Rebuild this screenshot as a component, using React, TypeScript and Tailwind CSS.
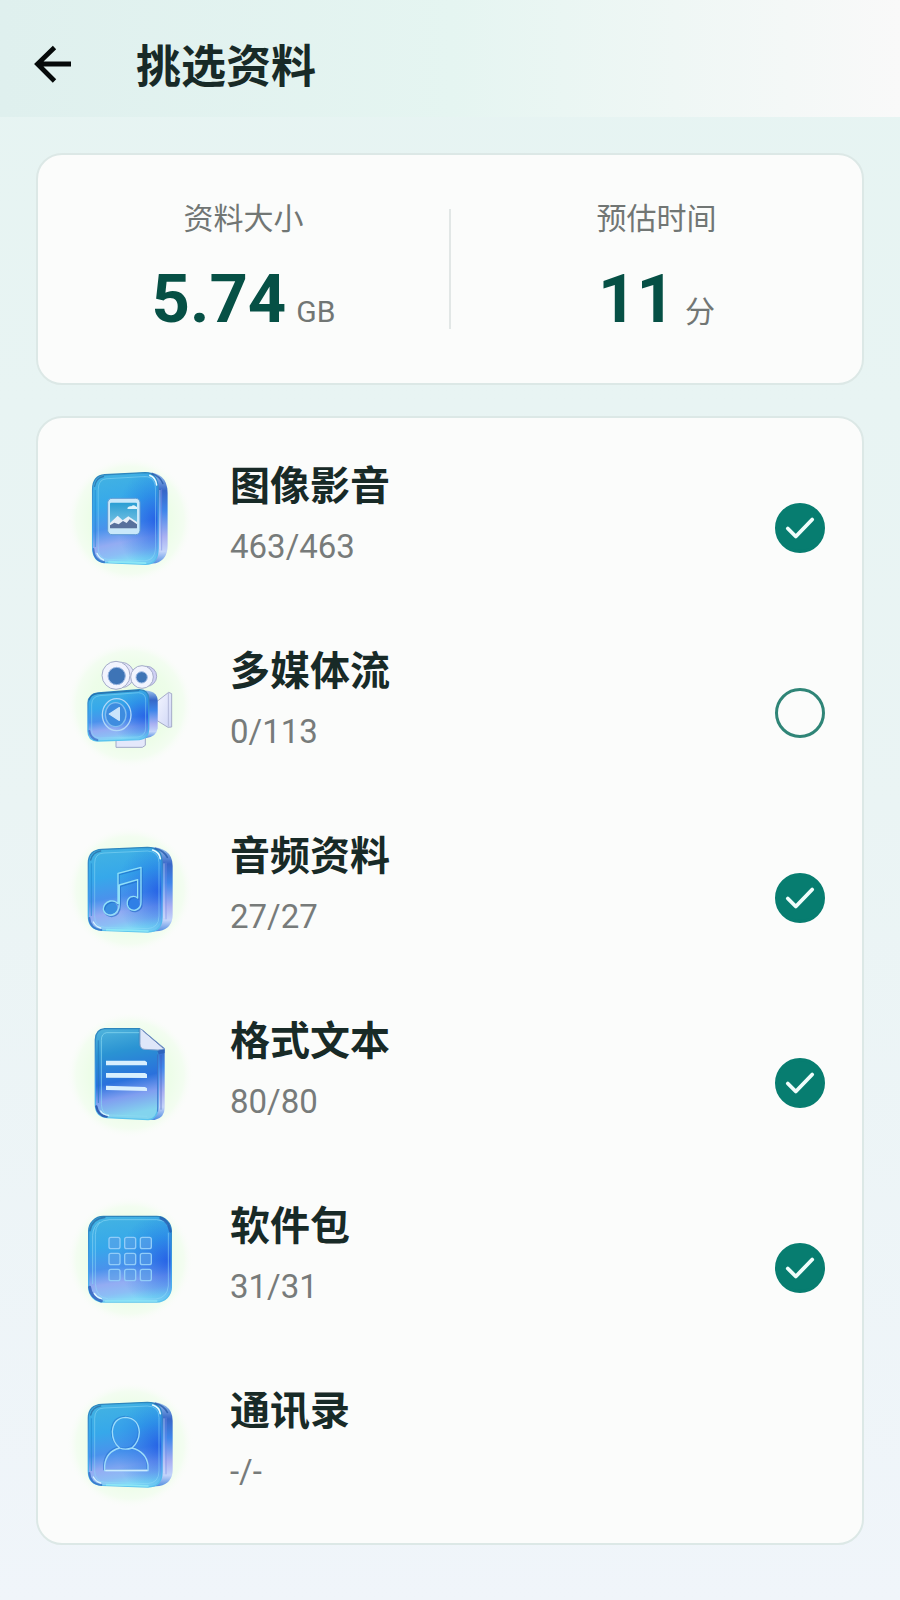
import { useState } from "react";
import type { ReactNode } from "react";

const CJK = "font-[Roboto,'Noto_Sans_CJK_SC',sans-serif]";

function Defs() {
  return (
    <svg className="absolute size-0" aria-hidden="true">
      <defs>
        <radialGradient id="glow">
          <stop offset="0" stopColor="#e8fbe1" />
          <stop offset="0.65" stopColor="#edfde9" />
          <stop offset="0.85" stopColor="#f3fdf1" />
          <stop offset="1" stopColor="#fbfcfb" stopOpacity="0" />
        </radialGradient>
        <linearGradient id="face" x1="0.2" y1="0" x2="0.35" y2="1">
          <stop offset="0" stopColor="#43b3e2" />
          <stop offset="0.35" stopColor="#36a8ea" />
          <stop offset="0.6" stopColor="#4a92ec" />
          <stop offset="0.78" stopColor="#93acf3" />
          <stop offset="0.9" stopColor="#8cbdf5" />
          <stop offset="1" stopColor="#80dcf6" />
        </linearGradient>
        <radialGradient id="deep" cx="0.97" cy="0.52" r="0.6">
          <stop offset="0" stopColor="#1c56e4" stopOpacity="0.8" />
          <stop offset="0.5" stopColor="#1f66e4" stopOpacity="0.38" />
          <stop offset="1" stopColor="#1f7ee4" stopOpacity="0" />
        </radialGradient>
        <linearGradient id="side" x1="0" y1="0" x2="0" y2="1">
          <stop offset="0" stopColor="#9cc4ee" />
          <stop offset="0.2" stopColor="#3767c8" />
          <stop offset="0.42" stopColor="#3f86ea" />
          <stop offset="0.7" stopColor="#a9b0f2" />
          <stop offset="0.86" stopColor="#c3d4fa" />
          <stop offset="1" stopColor="#4d8be0" />
        </linearGradient>
        <linearGradient id="rim" x1="0" y1="0" x2="0" y2="1">
          <stop offset="0" stopColor="#2d86bd" />
          <stop offset="0.6" stopColor="#3e9bea" />
          <stop offset="1" stopColor="#5bc4ee" />
        </linearGradient>
        <linearGradient id="sky" x1="0" y1="0" x2="0" y2="1">
          <stop offset="0" stopColor="#2a9ed3" />
          <stop offset="1" stopColor="#86c8e6" />
        </linearGradient>
        <linearGradient id="paper" x1="0" y1="0" x2="0.15" y2="1">
          <stop offset="0" stopColor="#51b5dc" />
          <stop offset="0.3" stopColor="#2a93d3" />
          <stop offset="0.62" stopColor="#2a71dc" />
          <stop offset="0.8" stopColor="#809ef0" />
          <stop offset="1" stopColor="#83d4ee" />
        </linearGradient>
        <linearGradient id="glass" x1="0" y1="0" x2="1" y2="1">
          <stop offset="0" stopColor="#f4f6ff" />
          <stop offset="1" stopColor="#cfd6f6" />
        </linearGradient>
      </defs>
    </svg>
  );
}

function IconFrame({ children }: { children: ReactNode }) {
  return (
    <svg viewBox="0 0 420 450" className="h-[150px] w-[140px] shrink-0" fill="none" aria-hidden="true">
      <circle cx="210" cy="222" r="190" fill="url(#glow)" />
      {children}
    </svg>
  );
}

function GlassTile() {
  return (
    <>
      <path d="M262 93 Q300 92 318 106 Q338 120 338 150 V296 Q338 336 298 345 L262 348 Z" fill="url(#side)" />
      <path d="M318 140 V310" stroke="#7c8de6" strokeWidth="3" opacity="0.6" />
      <path d="M312 142 V306" stroke="#d3e4ff" strokeWidth="3" opacity="0.7" />
      <path d="M126 100 L262 94 Q306 94 306 138 V304 Q306 347 264 348 L126 343 Q85 340 85 300 V140 Q86 102 126 100 Z" fill="url(#face)" />
      <path d="M126 100 L262 94 Q306 94 306 138 V304 Q306 347 264 348 L126 343 Q85 340 85 300 V140 Q86 102 126 100 Z" fill="url(#deep)" />
      <path d="M126 100 L262 94 Q306 94 306 138 V304 Q306 347 264 348 L126 343 Q85 340 85 300 V140 Q86 102 126 100 Z" stroke="url(#rim)" strokeWidth="4" />
      <path d="M132 111 L262 105 Q297 106 297 140 V300 Q297 336 262 338 L134 334 Q104 332 104 300 V142 Q104 112 132 111 Z" stroke="#8fdcf7" strokeWidth="3" opacity="0.5" />
      <path d="M94 142 V300" stroke="#1f86cf" strokeWidth="3" opacity="0.7" />
      <path d="M88 306 Q90 338 124 342" stroke="#2252b8" strokeWidth="6" strokeLinecap="round" opacity="0.6" />
      <path d="M100 318 Q108 332 122 336" stroke="#d8f3ff" strokeWidth="4" strokeLinecap="round" />
      <path d="M92 132 Q98 108 122 105" stroke="#2a6fa8" strokeWidth="4" strokeLinecap="round" opacity="0.8" />
      <path d="M278 102 Q298 108 301 128" stroke="#e9fbff" strokeWidth="5" strokeLinecap="round" />
      <path d="M286 97 Q312 104 322 124" stroke="#2255a8" strokeWidth="5" strokeLinecap="round" opacity="0.75" />
      <path d="M140 341 L264 345" stroke="#8ce6f6" strokeWidth="5" strokeLinecap="round" />
    </>
  );
}

function PhotoIcon() {
  return (
    <IconFrame>
      <g transform="translate(22 -22) scale(0.89 1.083)">
        <GlassTile />
      </g>
      <g transform="translate(0 -18)">
        <rect x="143" y="175" width="97" height="109" rx="13" fill="#c9e8fa" stroke="#5f9cd4" strokeWidth="3" />
        <rect x="150" y="188" width="81" height="77" rx="3" fill="url(#sky)" />
        <path d="M202 204 Q206 197 214 199 Q220 192 227 199 L231 201 V207 H203 Z" fill="#dff3fc" />
        <path d="M150 249 L173 227 L188 241 L205 229 L231 246 V265 H150 Z" fill="#e6eff8" />
        <path d="M150 256 L163 248 L176 253 L189 243 L200 249 L209 238 L231 253 V265 H150 Z" fill="#58719c" />
      </g>
    </IconFrame>
  );
}

function CameraIcon() {
  return (
    <IconFrame>
      <circle cx="184" cy="132" r="38" fill="#e3e4fa" stroke="#a6aec9" strokeWidth="3" />
      <circle cx="168" cy="133" r="42" fill="#f2f4fe" stroke="#a3abc8" strokeWidth="3" />
      <circle cx="170" cy="135" r="26" fill="#3e74b6" stroke="#9db8e2" strokeWidth="3" />
      <circle cx="260" cy="136" r="30" fill="#cfd0f5" stroke="#a6aacb" strokeWidth="3" />
      <circle cx="246" cy="138" r="34" fill="#f2f4fe" stroke="#a3abc8" strokeWidth="3" />
      <circle cx="245" cy="139" r="17" fill="#3e74b6" stroke="#9db8e2" strokeWidth="3" />
      <path d="M290 212 L326 184 L335 188 V288 L324 289 L290 268 Z" fill="url(#glass)" stroke="#a5abc9" strokeWidth="3" strokeLinejoin="round" />
      <path d="M325 186 V286" stroke="#b4bada" strokeWidth="3" />
      <path d="M168 322 H248 L256 318 V343 L247 349 H168 Z" fill="#e4e8fb" stroke="#a0a8c8" strokeWidth="3" />
      <path d="M248 178 Q292 178 293 208 V292 Q290 318 256 322 Z" fill="url(#side)" />
      <path d="M114 186 L238 176 Q266 177 266 204 V294 Q265 324 238 326 L112 330 Q84 328 84 300 V216 Q86 189 114 186 Z" fill="url(#face)" />
      <path d="M114 186 L238 176 Q266 177 266 204 V294 Q265 324 238 326 L112 330 Q84 328 84 300 V216 Q86 189 114 186 Z" fill="url(#deep)" />
      <path d="M114 186 L238 176 Q266 177 266 204 V294 Q265 324 238 326 L112 330 Q84 328 84 300 V216 Q86 189 114 186 Z" stroke="url(#rim)" strokeWidth="4" />
      <path d="M119 194 L236 185 Q257 187 257 207 V291 Q256 315 234 318 L118 321 Q95 319 95 297 V219 Q96 197 119 194 Z" stroke="#8edaf8" strokeWidth="3" opacity="0.5" />
      <path d="M88 206 Q92 191 112 188 L236 179" stroke="#2165a4" strokeWidth="4" strokeLinecap="round" opacity="0.7" />
      <path d="M88 300 Q92 324 112 327" stroke="#2759ba" strokeWidth="6" strokeLinecap="round" opacity="0.6" />
      <ellipse cx="170" cy="251" rx="43" ry="48" stroke="#b1d8f8" strokeWidth="4" />
      <ellipse cx="167" cy="251" rx="31" ry="36" fill="#3e8cdf" stroke="#82bdf0" strokeWidth="4" />
      <path d="M148 249 L178 230 V268 Z" fill="#cbe4fb" stroke="#cbe4fb" strokeWidth="4" strokeLinejoin="round" />
    </IconFrame>
  );
}

function MusicIcon() {
  const note =
    "M174 264 V172 L243 154 V258 Q244 278 224 283 Q206 284 202 266 Q200 250 211 243 Q224 238 233 246 V191 L178 207 V262 Q178 294 152 298 Q133 296 130 280 Q130 262 150 255 Q166 252 174 264";
  return (
    <IconFrame>
      <GlassTile />
      <ellipse cx="152" cy="276" rx="20" ry="19" fill="#398fe0" />
      <ellipse cx="221" cy="263" rx="18" ry="18" fill="#2f7fe6" />
      <path d={note} transform="translate(3 4)" stroke="#1c67c4" strokeWidth="4" opacity="0.6" />
      <path d={note} stroke="#91e0f8" strokeWidth="4" strokeLinejoin="round" />
    </IconFrame>
  );
}

function DocumentIcon() {
  return (
    <IconFrame>
      <path d="M244 83 L314 142 V320 Q314 350 284 357 L250 356 Z" fill="url(#side)" />
      <path d="M134 83 H238 V126 Q238 144 256 144 L294 146 V318 Q292 354 264 356 L142 350 Q106 347 106 310 V116 Q107 85 134 83 Z" fill="url(#paper)" stroke="url(#rim)" strokeWidth="4" />
      <path d="M140 95 H238 M124 118 Q124 97 140 95 M124 118 V310 Q126 340 148 342 L262 346" stroke="#8cdaf2" strokeWidth="3" opacity="0.7" />
      <path d="M115 118 V306" stroke="#1e78bb" strokeWidth="3" opacity="0.7" />
      <path d="M240 83 Q248 86 254 94 L314 144 L294 147 L254 145 Q240 144 240 128 Z" fill="#dfe7f9" stroke="#86a5cf" strokeWidth="3" strokeLinejoin="round" />
      <path d="M248 88 L310 142" stroke="#6c86b8" strokeWidth="3" />
      <path d="M292 150 L314 145 V156 L296 160 Z" fill="#2a62b8" opacity="0.8" />
      <path d="M293 160 V332 M303 162 V326" stroke="#3c58bd" strokeWidth="3" opacity="0.6" />
      <path d="M109 316 Q114 344 140 347" stroke="#2347a4" strokeWidth="7" strokeLinecap="round" opacity="0.8" />
      <path d="M122 330 Q130 342 146 343" stroke="#dff8ff" strokeWidth="4" strokeLinecap="round" />
      <path d="M138 179 H255 L261 184 V193 H138 Z M138 216 H255 L261 220 V231 L138 230 Z M138 254 L255 258 L261 262 V270 L138 267 Z" fill="#d8effe" />
    </IconFrame>
  );
}

function AppsIcon() {
  const cells = [0, 1, 2, 3, 4, 5, 6, 7, 8];
  return (
    <IconFrame>
      <rect x="86" y="91" width="248" height="257" rx="44" fill="url(#face)" />
      <rect x="86" y="91" width="248" height="257" rx="44" fill="url(#deep)" />
      <rect x="86" y="91" width="248" height="257" rx="44" stroke="url(#rim)" strokeWidth="4" />
      <path d="M322 120 Q327 106 290 101 H148 Q106 103 106 146 V292 Q108 336 146 339 H288 Q322 335 325 300 V140" stroke="#93ddf7" strokeWidth="3" opacity="0.55" />
      <path d="M120 108 Q99 120 98 148 V294" stroke="#87d4f3" strokeWidth="3" opacity="0.7" />
      <path d="M90 134 Q96 98 134 94" stroke="#286ba5" strokeWidth="5" strokeLinecap="round" opacity="0.75" />
      <path d="M302 96 Q326 106 331 136" stroke="#2253a8" strokeWidth="8" strokeLinecap="round" opacity="0.7" />
      <path d="M89 304 Q92 334 124 345" stroke="#2250b4" strokeWidth="9" strokeLinecap="round" opacity="0.7" />
      <path d="M103 322 Q110 334 124 338" stroke="#dcf6ff" strokeWidth="4" strokeLinecap="round" />
      <path d="M136 345 H290" stroke="#8ee4f6" strokeWidth="5" strokeLinecap="round" />
      {cells.map((n) => (
        <rect
          key={n}
          x={147 + (n % 3) * 47}
          y={154 + Math.floor(n / 3) * 48}
          width="33"
          height="34"
          rx="6"
          fill="#5da2e8"
          fillOpacity="0.6"
          stroke="#91ccf8"
          strokeWidth="4"
        />
      ))}
    </IconFrame>
  );
}

function ContactIcon() {
  const person =
    "M179 231 Q157 213 157 182 Q160 141 197 139 Q236 142 238 184 Q237 213 216 231 Q258 242 264 282 V299 H134 V284 Q138 242 179 231 Q196 238 216 231";
  return (
    <IconFrame>
      <GlassTile />
      <path d={person} transform="translate(-3 -3)" stroke="#1f6bc9" strokeWidth="4" opacity="0.5" />
      <path d={person} fill="#3d90ec" fillOpacity="0.25" stroke="#9ddcfb" strokeWidth="4" strokeLinejoin="round" />
      <path d="M136 298 H262" stroke="#cbeafd" strokeWidth="5" />
    </IconFrame>
  );
}

type Category = { id: string; name: string; count: string; icon: ReactNode; selectable: boolean };

const categories: Category[] = [
  { id: "photos", name: "图像影音", count: "463/463", icon: <PhotoIcon />, selectable: true },
  { id: "media", name: "多媒体流", count: "0/113", icon: <CameraIcon />, selectable: true },
  { id: "audio", name: "音频资料", count: "27/27", icon: <MusicIcon />, selectable: true },
  { id: "documents", name: "格式文本", count: "80/80", icon: <DocumentIcon />, selectable: true },
  { id: "packages", name: "软件包", count: "31/31", icon: <AppsIcon />, selectable: true },
  { id: "contacts", name: "通讯录", count: "-/-", icon: <ContactIcon />, selectable: false },
];

function Stat({ label, value, unit }: { label: string; value: string; unit: string }) {
  return (
    <div className="flex flex-1 flex-col items-center gap-[18px]">
      <dt className="text-[30px] leading-[44px] text-[#717674]">{label}</dt>
      <dd className="flex h-[82px] items-baseline gap-[10px]">
        <span className="text-[67px] leading-[80px] font-bold text-[#065045]">{value}</span>
        <span className="text-[30px] leading-[44px] text-[#717674]">{unit}</span>
      </dd>
    </div>
  );
}

function CategoryText({ item }: { item: Category }) {
  return (
    <>
      <span className="text-[40px] leading-[56px] font-bold text-[#182a27]">{item.name}</span>
      <span className="text-[33px] leading-[48px] text-[#777b7a]">{item.count}</span>
    </>
  );
}

function CategoryRow({ item, checked, onToggle }: { item: Category; checked: boolean; onToggle: () => void }) {
  const textBox = "ml-[30px] flex flex-1 flex-col gap-2 pb-3";
  return (
    <li className="flex h-[185px] items-center pr-[37px] pl-[22px]">
      {item.icon}
      {item.selectable ? (
        <label htmlFor={item.id} className={textBox}>
          <CategoryText item={item} />
        </label>
      ) : (
        <div className={textBox}>
          <CategoryText item={item} />
        </div>
      )}
      {item.selectable && (
        <span className="mt-[15px] grid size-[50px] place-items-center">
          <input
            id={item.id}
            type="checkbox"
            checked={checked}
            onChange={onToggle}
            className="peer col-start-1 row-start-1 size-[50px] appearance-none rounded-full border-[3px] border-[#2f8577] checked:border-[#077d70] checked:bg-[#077d70]"
          />
          <svg
            viewBox="0 0 50 50"
            className="pointer-events-none invisible col-start-1 row-start-1 size-[50px] peer-checked:visible"
            fill="none"
            stroke="#effdfb"
            strokeWidth="3.8"
            strokeLinecap="round"
            strokeLinejoin="round"
            aria-hidden="true"
          >
            <path d="M12.8 25.5 L20.8 33.5 L37.2 16.5" />
          </svg>
        </span>
      )}
    </li>
  );
}

export default function App() {
  const [selected, setSelected] = useState<string[]>(["photos", "audio", "documents", "packages"]);
  const toggle = (id: string) =>
    setSelected((now) => (now.includes(id) ? now.filter((other) => other !== id) : [...now, id]));

  return (
    <div className={`min-h-screen bg-linear-to-b from-[#e6f4f2] via-[#eaf4f4] to-[#f0f5fa] ${CJK}`}>
      <Defs />
      <header className="flex h-[117px] items-center bg-linear-to-r from-[#dff0ee] via-[#e5f5f1] via-50% to-[#f9f9f9] pt-[14px] pb-[3px]">
        <button type="button" aria-label="返回" className="ml-[33px] grid size-10 place-items-center">
          <svg viewBox="0 0 40 40" className="size-10" fill="none" stroke="#060a0a" strokeWidth="4.8" aria-hidden="true">
            <path d="M38 20 H5 M21.5 3.5 L4.5 20 L21.5 37" />
          </svg>
        </button>
        <h1 className="mt-2 ml-[63px] text-[45px] leading-[64px] font-bold text-[#182a27]">挑选资料</h1>
      </header>
      <main className="flex flex-col gap-[31px] px-9 pt-9 pb-[55px]">
        <dl className="flex items-center rounded-[26px] border-2 border-[#dce8e6] bg-[#fbfcfb] py-[42px]">
          <Stat label="资料大小" value="5.74" unit="GB" />
          <div className="h-[120px] w-0.5 bg-[#e2e7e6]" />
          <Stat label="预估时间" value="11" unit="分" />
        </dl>
        <ul className="rounded-[26px] border-2 border-[#dce8e6] bg-[#fbfcfb] pt-[10px] pb-[5px]">
          {categories.map((item) => (
            <CategoryRow
              key={item.id}
              item={item}
              checked={selected.includes(item.id)}
              onToggle={() => toggle(item.id)}
            />
          ))}
        </ul>
      </main>
    </div>
  );
}
